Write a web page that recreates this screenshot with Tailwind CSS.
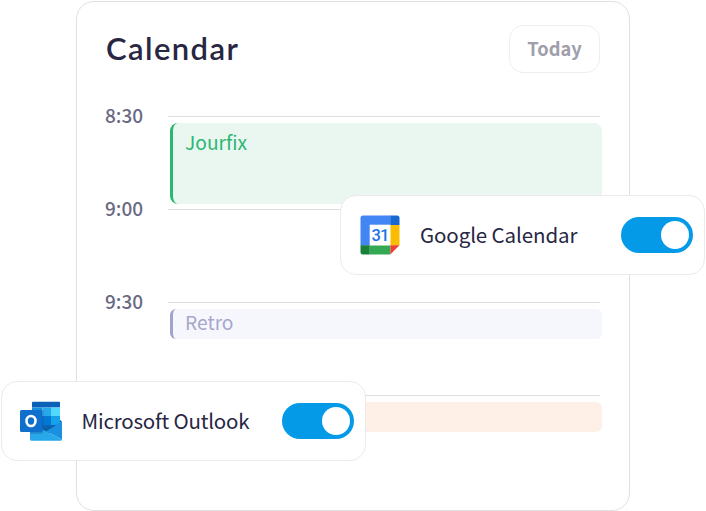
<!DOCTYPE html>
<html lang="en">
<head>
    <meta charset="UTF-8">
    <meta name="viewport" content="width=device-width, initial-scale=1.0">
    <title>Calendar</title>
    <script src="https://cdn.jsdelivr.net/npm/@tailwindcss/browser@4"></script>
</head>
<body class="bg-white font-['Noto_Sans_CJK_SC','Noto_Sans',sans-serif]">
    <div class="relative w-[706px] h-[511px] overflow-hidden">
        <!-- Calendar Card -->
        <main class="ml-[76px] pt-px w-[554px]">
            <div class="h-[510px] rounded-[18px] border border-[#e0e0e2] pl-7 pr-[29px] pt-[23px]">
                <header class="flex items-center justify-between h-12">
                    <h1 class="-mt-0.5 ml-px font-['Lato',sans-serif] text-[31px] font-semibold leading-none tracking-[1.4px] text-[#272643]">Calendar</h1>
                    <button class="w-[91px] h-12 rounded-[14px] border border-[#eeeeef] pb-[2px] text-[18.3px] font-bold leading-none text-[#9f9eab]">Today</button>
                </header>

                <!-- Time Slots -->
                <section class="mt-[43px]">
                    <div class="flex h-[93px]">
                        <span class="w-[63px] -mt-[13px] text-[19px] font-medium leading-6 text-[#6a6983]">8:30</span>
                        <div class="flex-1 border-t border-[#dfdfe1]">
                            <div class="ml-[2px] -mr-[2px] mt-[6px] h-[81px] rounded-lg border-l-[3px] border-[#2bb673] bg-[#e9f7f0] pl-3 pt-[7px] text-[19.2px] leading-6 text-[#2bb673]">Jourfix</div>
                        </div>
                    </div>
                    <div class="flex h-[93px]">
                        <span class="w-[63px] -mt-[13px] text-[19px] font-medium leading-6 text-[#6a6983]">9:00</span>
                        <div class="flex-1 border-t border-[#dfdfe1]"></div>
                    </div>
                    <div class="flex h-[93px]">
                        <span class="w-[63px] -mt-[13px] text-[19px] font-medium leading-6 text-[#6a6983]">9:30</span>
                        <div class="flex-1 border-t border-[#dfdfe1]">
                            <div class="ml-[2px] -mr-[2px] mt-[6px] h-[30px] rounded-md border-l-[3px] border-[#a3a2ca] bg-[#f6f7fc] pl-3 pt-px text-[19.2px] leading-6 text-[#a8a6cd]">Retro</div>
                        </div>
                    </div>
                    <div class="flex h-[93px]">
                        <span class="w-[63px]"></span>
                        <div class="flex-1 border-t border-[#dfdfe1]">
                            <div class="ml-[2px] -mr-[2px] mt-[6px] h-[30px] rounded-md bg-[#fff0e7]"></div>
                        </div>
                    </div>
                </section>
            </div>
        </main>

        <!-- Google Calendar Toggle -->
        <div class="absolute left-[340px] top-[195px] flex items-center w-[365px] h-[80px] rounded-2xl border border-[#ebebed] bg-white pl-[19px] pr-[11px]">
            <svg class="w-10 h-10 shrink-0" viewBox="0 0 40 40">
                <path fill="#4285f4" d="M3 .5h27.500v9.500H10v20.500H.5V3A2.500 2.500 0 0 1 3 .5z"/>
                <path fill="#1967d2" d="M30.300.5H37A2.500 2.500 0 0 1 39.500 3v7h-9.200z"/>
                <path fill="#fbbc04" d="M30.300 10h9.200v20.500h-9.200z"/>
                <path fill="#34a853" d="M9.700 30.300h20.600v9.200H9.700z"/>
                <path fill="#188038" d="M.5 30.300h9.200v9.200H3A2.500 2.500 0 0 1 .5 37z"/>
                <path fill="#ea4335" d="M30.300 30.300h9.200l-9.200 9.200z"/>
                <path fill="#fff" d="M9.700 9.700h20.600v20.600H9.700z"/>
                <text x="20" y="26" text-anchor="middle" font-family="Roboto, sans-serif" font-size="16.5" font-weight="500" letter-spacing="-0.8" fill="#1a73e8">31</text>
            </svg>
            <span class="-mt-[3px] ml-5 text-[20.5px] leading-7 tracking-[-0.1px] text-[#272643]">Google Calendar</span>
            <button class="ml-auto flex items-center justify-end w-[72px] h-9 rounded-full bg-[#059ae8] pr-1">
                <span class="w-[28px] h-[28px] rounded-full bg-white"></span>
            </button>
        </div>

        <!-- Microsoft Outlook Toggle -->
        <div class="absolute left-px top-[381px] flex items-center w-[365px] h-[80px] rounded-2xl border border-[#ebebed] bg-white pl-[18px] pr-[11px]">
            <svg class="w-[43px] h-10 shrink-0" viewBox="0 0 43 40">
                <path fill="#0a62b8" d="M13 .7h26a1 1 0 0 1 1 1v4.800H12V1.700a1 1 0 0 1 1-1z"/>
                <path fill="#1490df" d="M12 6.500h10.300v8.700H12z"/>
                <path fill="#28a8ea" d="M22.300 6.500H31v8.700h-8.700z"/>
                <path fill="#50d9ff" d="M31 6.500h9v8.700h-9z"/>
                <path fill="#0a64b8" d="M12 15.200h28V32H12z"/>
                <path fill="#0078d4" d="M22.300 15.200H31V24h-8.700z"/>
                <path fill="#14a2ea" d="M31 15.200h9V24h-9z"/>
                <path fill="#0e5ca8" d="M40 19l2 1.500L27 31l-5-3 18-5z"/>
                <path fill="#1a90e0" d="M42 20.500V38.500L26 30.200z"/>
                <path fill="#28a8ea" d="M10 22l32 16.500c0 .700-.5 1.200-1.200 1.200H11.500A1.500 1.500 0 0 1 10 38.200z"/>
                <path fill="#0b4f91" opacity=".35" d="M10 9h11.500A1.800 1.800 0 0 1 23.300 10.800V31a1.800 1.800 0 0 1-1.800 1.800H10z"/>
                <rect y="9" width="22.300" height="22" rx="1.500" fill="#0f6fcd"/>
                <ellipse cx="11" cy="20" rx="4.500" ry="5" fill="none" stroke="#fff" stroke-width="2.600"/>
            </svg>
            <span class="-mt-[3px] ml-[18.5px] text-[20.5px] leading-7 tracking-[-0.2px] text-[#272643]">Microsoft Outlook</span>
            <button class="ml-auto flex items-center justify-end w-[72px] h-9 rounded-full bg-[#059ae8] pr-1">
                <span class="w-[28px] h-[28px] rounded-full bg-white"></span>
            </button>
        </div>
    </div>
</body>
</html>
